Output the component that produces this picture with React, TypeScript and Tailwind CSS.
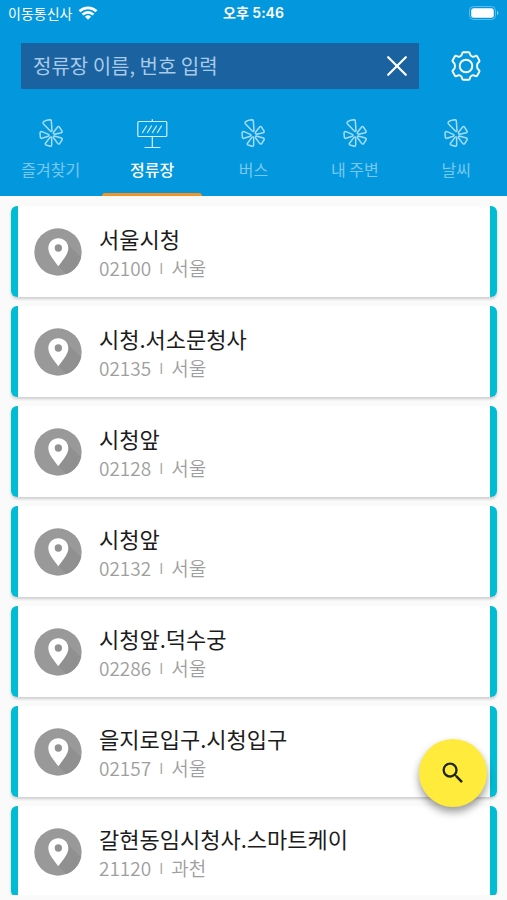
import React, { useState } from 'react';
import clsx from 'clsx';

interface Stop {
  name: string;
  code: string;
  region: string;
}

const stops: Stop[] = [
  { name: '서울시청', code: '02100', region: '서울' },
  { name: '시청.서소문청사', code: '02135', region: '서울' },
  { name: '시청앞', code: '02128', region: '서울' },
  { name: '시청앞', code: '02132', region: '서울' },
  { name: '시청앞.덕수궁', code: '02286', region: '서울' },
  { name: '을지로입구.시청입구', code: '02157', region: '서울' },
  { name: '갈현동임시청사.스마트케이', code: '21120', region: '과천' },
];

const PinwheelIcon = () => (
  <svg
    viewBox="117 57 72 84"
    className="h-7 w-6"
    fill="none"
    stroke="currentColor"
    strokeWidth="4.5"
    strokeLinejoin="round"
    aria-hidden="true"
  >
    <path d="M131 65 Q138 60 150 59 Q154 59 154 63 L156 92 Q155 96 151 93 L130 71 Q128 68 131 65Z" />
    <path d="M161 96 L173 81 Q176 78 179 82 L186 93 Q188 97 184 98 L164 103 Q158 101 161 96Z" />
    <path d="M163 108 L184 114 Q188 116 186 120 L179 131 Q176 134 173 130 L161 114 Q159 108 163 108Z" />
    <path d="M155 114 L155 135 Q155 139 151 139 L138 135 Q134 133 137 129 L150 112 Q154 109 155 114Z" />
    <path d="M126 95 L145 103 Q149 106 145 109 L126 115 Q122 116 121 111 L120 99 Q121 94 126 95Z" />
  </svg>
);

const BoardIcon = () => (
  <svg
    viewBox="0 0 32 32"
    className="h-8 w-8"
    fill="none"
    stroke="currentColor"
    strokeWidth="1.2"
    strokeLinecap="round"
    strokeLinejoin="round"
    aria-hidden="true"
  >
    <rect x="1.8" y="4.5" width="29" height="15" rx="1" />
    <path d="M16.300 2.500v2M16.300 19.500v11M9 30.500h15M6.500 15.500l4-6.500M11.500 15.500l4-6.500M16.500 15.500l4-6.500M21.500 15.500l4-6.500" />
  </svg>
);

const GearIcon = () => (
  <svg
    viewBox="0 0 30 30"
    className="h-[30px] w-[30px]"
    fill="none"
    stroke="currentColor"
    strokeWidth="1.9"
    strokeLinejoin="round"
    aria-hidden="true"
  >
    <path d="M12.500 1.200h5q1.200 0 1.300 1.200 .3 2.500 2.400 3.200 1.500.4 3-.6 1.300-.7 2 .5l2 3.600q.7 1.200-.5 2-1.700 1.200-1.700 3.900t1.700 3.900q1.200.8.5 2l-2 3.600q-.7 1.200-2 .5-1.500-1-3-.6-2.100.7-2.400 3.200-.1 1.200-1.300 1.200h-5q-1.200 0-1.300-1.200-.3-2.500-2.400-3.200-1.500-.4-3 .6-1.300.7-2-.5l-2-3.600q-.7-1.200.5-2 1.700-1.200 1.700-3.900t-1.700-3.900q-1.200-.8-.5-2l2-3.600q.7-1.200 2-.5 1.500 1 3 .6 2.100-.7 2.400-3.200.1-1.200 1.300-1.200z" />
    <circle cx="15" cy="15" r="6.300" />
  </svg>
);

const CloseIcon = () => (
  <svg viewBox="0 0 20 20" className="h-5 w-5" stroke="currentColor" strokeWidth="2.200" strokeLinecap="round" aria-hidden="true">
    <path d="M1.200 1.200l17.600 17.600M18.800 1.200L1.200 18.800" />
  </svg>
);

const WifiIcon = () => (
  <svg viewBox="0 0 20 14" className="h-3.5 w-5" fill="none" stroke="currentColor" strokeWidth="2.700" aria-hidden="true">
    <path d="M1.500 5.300a12.200 12.200 0 0 1 17 0M4.600 8.600a7.800 7.800 0 0 1 10.800 0" />
    <path d="M10 13.800l-3-3a4.300 4.300 0 0 1 6 0z" fill="currentColor" stroke="none" />
  </svg>
);

const BatteryIcon = () => (
  <svg viewBox="0 0 30 14" className="h-3.5 w-[30px]" aria-hidden="true">
    <rect x="0.500" y="0.500" width="26" height="13" rx="4" fill="none" stroke="white" strokeOpacity="0.350" />
    <rect x="2.200" y="2.200" width="22.600" height="9.600" rx="2.500" fill="white" />
    <path d="M28 4.800c2 .8 2 3.600 0 4.400z" fill="white" fillOpacity="0.500" />
  </svg>
);

const MarkerIcon = () => (
  <svg viewBox="0 0 144 144" className="h-12 w-12 shrink-0" aria-hidden="true">
    <defs>
      <clipPath id="disc">
        <circle cx="72" cy="72" r="71" />
      </clipPath>
    </defs>
    <circle cx="72" cy="72" r="71" fill="#999999" />
    <path d="M94 41L160 107V160H118L73 115z" fill="#909090" clipPath="url(#disc)" />
    <path d="M73 31c-17 0-30 13-30 29 0 20 17 36 30 55 13-19 30-35 30-55 0-16-13-29-30-29z" fill="white" />
    <circle cx="73" cy="60" r="11" fill="#929292" />
  </svg>
);

const SearchIcon = () => (
  <svg viewBox="0 0 24 24" className="h-7 w-7" fill="currentColor" aria-hidden="true">
    <path d="M15.500 14h-.79l-.28-.27A6.471 6.471 0 0 0 16 9.500 6.500 6.500 0 1 0 9.500 16c1.610 0 3.090-.59 4.230-1.570l.27.28v.79l5 4.990L20.490 19l-4.990-5zm-6 0C7.010 14 5 11.990 5 9.500S7.010 5 9.500 5 14 7.010 14 9.500 11.990 14 9.500 14z" />
  </svg>
);

const tabs = [
  { id: 'favorites', label: '즐겨찾기', icon: <PinwheelIcon /> },
  { id: 'stops', label: '정류장', icon: <BoardIcon /> },
  { id: 'bus', label: '버스', icon: <PinwheelIcon /> },
  { id: 'nearby', label: '내 주변', icon: <PinwheelIcon /> },
  { id: 'weather', label: '날씨', icon: <PinwheelIcon /> },
];

const StopCard: React.FC<{ stop: Stop }> = ({ stop }) => (
  <li className="shrink-0 rounded-md bg-white shadow-[0_2px_3px_rgba(0,0,0,0.18)]">
    <button className="flex h-[91px] w-full items-center overflow-hidden rounded-md border-x-[7px] border-[#00bcd4] bg-[linear-gradient(white,white)] bg-clip-padding pl-4 text-left">
      <MarkerIcon />
      <span className="ml-[17px] flex min-w-0 flex-col">
        <span className="truncate text-[22px] leading-8 text-[#1c1c1c]">{stop.name}</span>
        <span className="flex items-center gap-2 text-[19px] leading-7 font-[350] text-[#9e9e9e]">
          <span>{stop.code}</span>
          <span className="text-sm">I</span>
          <span>{stop.region}</span>
        </span>
      </span>
    </button>
  </li>
);

export default function App() {
  const [activeTab, setActiveTab] = useState('stops');
  const [query, setQuery] = useState('');

  return (
    <div className="relative flex h-screen flex-col bg-[#fafafa] pb-[5px] font-['Noto_Sans_CJK_KR',sans-serif]">
      <header className="shrink-0 bg-[#0398dd] text-white">
        {/* Status bar */}
        <div className="grid h-[26px] grid-cols-3 items-center pr-2 pl-2 text-sm">
          <div className="flex items-center gap-1.5">
            <span>이동통신사</span>
            <WifiIcon />
          </div>
          <div className="text-center font-['Inter','Noto_Sans_CJK_KR',sans-serif] font-semibold">오후 5:46</div>
          <div className="flex justify-end">
            <BatteryIcon />
          </div>
        </div>

        {/* Search */}
        <div className="mt-[17px] flex items-center pr-[26px] pl-[21px]">
          <div className="flex h-[46px] min-w-0 flex-1 items-center bg-[#1a62a0] px-3">
            <input
              type="text"
              aria-label="정류장 이름, 번호 입력"
              placeholder="정류장 이름, 번호 입력"
              value={query}
              onChange={(e) => setQuery(e.target.value)}
              className="min-w-0 flex-1 bg-transparent text-xl text-white outline-none placeholder:text-[#a9cbe8]"
            />
            <button aria-label="지우기" onClick={() => setQuery('')}>
              <CloseIcon />
            </button>
          </div>
          <button aria-label="설정" className="ml-8">
            <GearIcon />
          </button>
        </div>

        {/* Tabs */}
        <nav className="mt-5 grid grid-cols-5">
          {tabs.map((tab) => (
            <button
              key={tab.id}
              onClick={() => setActiveTab(tab.id)}
              className={clsx(
                'flex h-[87px] flex-col items-center pt-2',
                activeTab === tab.id ? 'font-medium text-white' : 'text-[#79c8f0]'
              )}
            >
              <span className={clsx('flex h-8 items-center', activeTab === tab.id ? 'text-[#d5effc]' : 'text-[#a5dcf8]')}>
                {tab.icon}
              </span>
              <span className="mt-2 text-base leading-6">{tab.label}</span>
              {activeTab === tab.id && <span className="mt-auto h-[3px] w-[100px] rounded-t-sm bg-[#f39325]" />}
            </button>
          ))}
        </nav>
      </header>

      {/* Stop list */}
      <main className="min-h-0 flex-1 overflow-hidden">
        <ul className="flex flex-col gap-[9px] pt-2.5 pr-2.5 pl-[11px]">
          {stops.map((stop) => (
            <StopCard key={stop.code} stop={stop} />
          ))}
        </ul>
      </main>

      {/* Floating search button */}
      <button
        aria-label="검색"
        className="absolute right-5 bottom-[93px] flex h-[68px] w-[68px] items-center justify-center rounded-full bg-[#ffeb3b] text-[#1d2410] shadow-[0_5px_8px_rgba(0,0,0,0.4)]"
      >
        <SearchIcon />
      </button>
    </div>
  );
}
